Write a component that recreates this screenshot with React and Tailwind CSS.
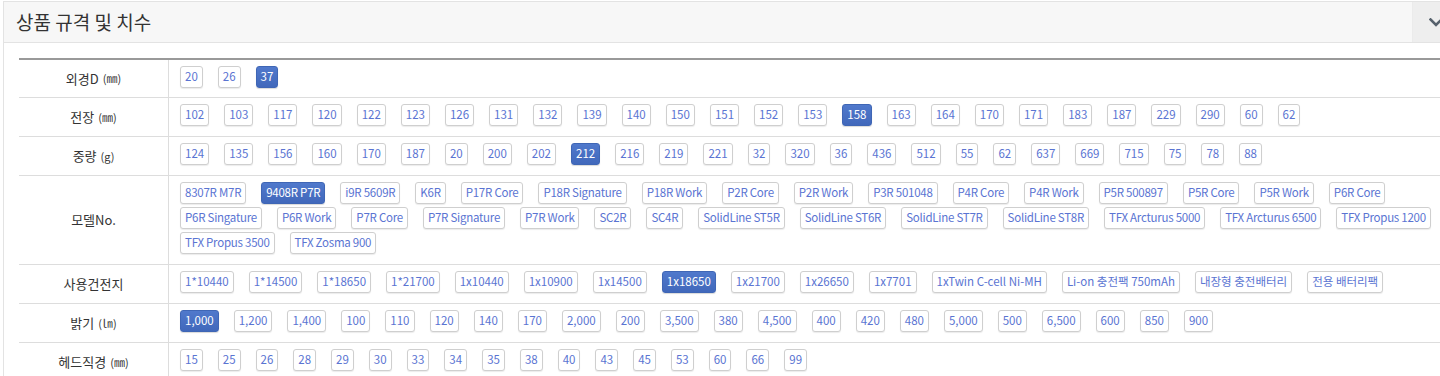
import React from 'react';

const rows = [
  { label: '외경D', unit: '(㎜)', items: ['20', '26', '37'], active: '37' },
  {
    label: '전장',
    unit: '(㎜)',
    items: ['102', '103', '117', '120', '122', '123', '126', '131', '132', '139', '140', '150', '151', '152', '153', '158', '163', '164', '170', '171', '183', '187', '229', '290', '60', '62'],
    active: '158',
  },
  {
    label: '중량',
    unit: '(g)',
    items: ['124', '135', '156', '160', '170', '187', '20', '200', '202', '212', '216', '219', '221', '32', '320', '36', '436', '512', '55', '62', '637', '669', '715', '75', '78', '88'],
    active: '212',
  },
  {
    label: '모델No.',
    tight: true,
    items: [
      '8307R M7R', '9408R P7R', 'i9R 5609R', 'K6R', 'P17R Core', 'P18R Signature', 'P18R Work', 'P2R Core', 'P2R Work', 'P3R 501048',
      'P4R Core', 'P4R Work', 'P5R 500897', 'P5R Core', 'P5R Work', 'P6R Core', 'P6R Singature', 'P6R Work', 'P7R Core', 'P7R Signature',
      'P7R Work', 'SC2R', 'SC4R', 'SolidLine ST5R', 'SolidLine ST6R', 'SolidLine ST7R', 'SolidLine ST8R', 'TFX Arcturus 5000',
      'TFX Arcturus 6500', 'TFX Propus 1200', 'TFX Propus 3500', 'TFX Zosma 900',
    ],
    active: '9408R P7R',
  },
  {
    label: '사용건전지',
    items: ['1*10440', '1*14500', '1*18650', '1*21700', '1x10440', '1x10900', '1x14500', '1x18650', '1x21700', '1x26650', '1x7701', '1xTwin C-cell Ni-MH', 'Li-on 충전팩 750mAh', '내장형 충전배터리', '전용 배터리팩'],
    active: '1x18650',
  },
  {
    label: '밝기',
    unit: '(㏐)',
    items: ['1,000', '1,200', '1,400', '100', '110', '120', '140', '170', '2,000', '200', '3,500', '380', '4,500', '400', '420', '480', '5,000', '500', '6,500', '600', '850', '900'],
    active: '1,000',
  },
  {
    label: '헤드직경',
    unit: '(㎜)',
    items: ['15', '25', '26', '28', '29', '30', '33', '34', '35', '38', '40', '43', '45', '53', '60', '66', '99'],
  },
];

const Chip = ({ text, active, tight }) => (
  <span
    className={`inline-flex h-[22px] items-center rounded-[3px] border px-[4px] text-[11.5px] leading-none ${
      tight ? 'tracking-[-0.25px]' : ''
    } ${
      active
        ? 'border-[#3f66b5] bg-gradient-to-b from-[#5079cc] to-[#4168bb] text-white shadow-[0_1px_1px_rgba(0,0,0,0.15)]'
        : 'border-[#cfcfcf] bg-white text-[#5a74d2] shadow-[0_1px_1px_rgba(0,0,0,0.08)]'
    }`}
  >
    {text}
  </span>
);

export default function App() {
  return (
    <div
      className="h-[376px] w-full overflow-hidden bg-white text-[#333]"
      style={{ fontFamily: '"Noto Sans CJK KR", "Noto Sans", sans-serif' }}
    >
      {/* panel runs a little past the right edge of the window */}
      <div className="ml-[3px] mt-[1px] w-[1470px] border border-[#e3e3e3]">
        <div className="flex h-[41px] items-stretch border-b border-[#e3e3e3] bg-[#f7f7f7]">
          <h3 className="flex flex-1 items-center pl-[12px] text-[19px] font-normal text-[#333]">상품 규격 및 치수</h3>
          <button className="flex w-[60px] items-center justify-start border-l border-[#ebebeb] bg-[#eeeeee] pl-[16px]">
            <svg width="14" height="9" viewBox="0 0 14 9" fill="none">
              <path d="M1.5 1.5 L7 7 L12.5 1.5" stroke="#56616c" strokeWidth="2.6" strokeLinecap="square" />
            </svg>
          </button>
        </div>

        <div className="p-[15px]">
          <div className="border-t-2 border-[#999]">
            {rows.map((row, i) => (
              <div key={row.label} className="flex border-b border-[#dddddd]">
                <div className="flex w-[150px] shrink-0 items-center justify-center border-r border-[#dddddd] text-[13px] text-[#333]">
                  <span>{row.label}</span>
                  {row.unit && <span className="ml-[4px] text-[11px]">{row.unit}</span>}
                </div>
                <div
                  className={`flex flex-1 flex-wrap gap-x-[15px] gap-y-[3px] pl-[11px] pt-[6px] ${
                    i === 0 ? 'pb-[9px]' : 'pb-[10px]'
                  }`}
                >
                  {row.items.map((it) => (
                    <Chip key={it} text={it} tight={row.tight} active={it === row.active} />
                  ))}
                </div>
              </div>
            ))}
          </div>
        </div>
      </div>
    </div>
  );
}
